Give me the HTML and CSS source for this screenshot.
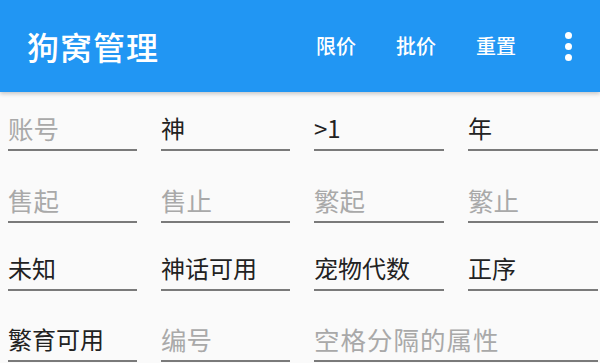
FILE: index.html
```html
<!DOCTYPE html>
<html lang="zh">
<head>
<meta charset="utf-8">
<link rel="stylesheet" href="styles.css">
</head>
<body>
<header class="appbar">
  <h1 class="title">狗窝管理</h1>
  <nav class="actions">
    <span class="action">限价</span>
    <span class="action">批价</span>
    <span class="action">重置</span>
    <span class="more"><i></i><i></i><i></i></span>
  </nav>
</header>
<main class="form">
  <div class="field placeholder">账号</div>
  <div class="field">神</div>
  <div class="field">&gt;1</div>
  <div class="field">年</div>
  <div class="field placeholder">售起</div>
  <div class="field placeholder">售止</div>
  <div class="field placeholder">繁起</div>
  <div class="field placeholder">繁止</div>
  <div class="field">未知</div>
  <div class="field">神话可用</div>
  <div class="field">宠物代数</div>
  <div class="field">正序</div>
  <div class="field">繁育可用</div>
  <div class="field placeholder">编号</div>
  <div class="field placeholder wide">空格分隔的属性</div>
</main>
</body>
</html>
```
FILE: styles.css
```css
html, body {
  margin: 0;
  padding: 0;
}
body {
  width: 600px;
  height: 363px;
  overflow: hidden;
  background: #fafafa;
  font-family: "Noto Sans CJK SC", "Noto Sans", sans-serif;
}
.appbar {
  height: 92px;
  background: #2196f3;
  display: flex;
  align-items: center;
  padding: 0 28px 0 27px;
  box-shadow: 0 2px 4px rgba(0,0,0,0.2);
  position: relative;
  color: #fff;
}
.title {
  margin: 0;
  font-size: 32px;
  font-weight: 500;
  letter-spacing: 1px;
  flex: 1;
  line-height: 1;
}
.actions {
  display: flex;
  align-items: center;
}
.action {
  font-size: 20px;
  font-weight: 500;
  margin-right: 40px;
  line-height: 1;
}
.action:nth-child(3) {
  margin-right: 49px;
}
.more {
  display: flex;
  flex-direction: column;
  gap: 4px;
  width: 7px;
}
.more i {
  width: 7px;
  height: 7px;
  border-radius: 50%;
  background: #fff;
}
.form {
  display: grid;
  grid-template-columns: 129px 129px 130px 130px;
  grid-template-rows: 59px 72px 68px 71px;
  column-gap: 24px;
  padding: 0 0 0 8px;
}
.field {
  border-bottom: 2px solid #7a7a7a;
  box-sizing: border-box;
  display: flex;
  align-items: flex-end;
  padding-bottom: 6px;
  font-size: 24px;
  line-height: 30px;
  color: #222;
  white-space: nowrap;
}
.placeholder {
  color: #a9a9a9;
  font-size: 25.5px;
}
.wide {
  grid-column: span 2;
  letter-spacing: 1px;
}
```
